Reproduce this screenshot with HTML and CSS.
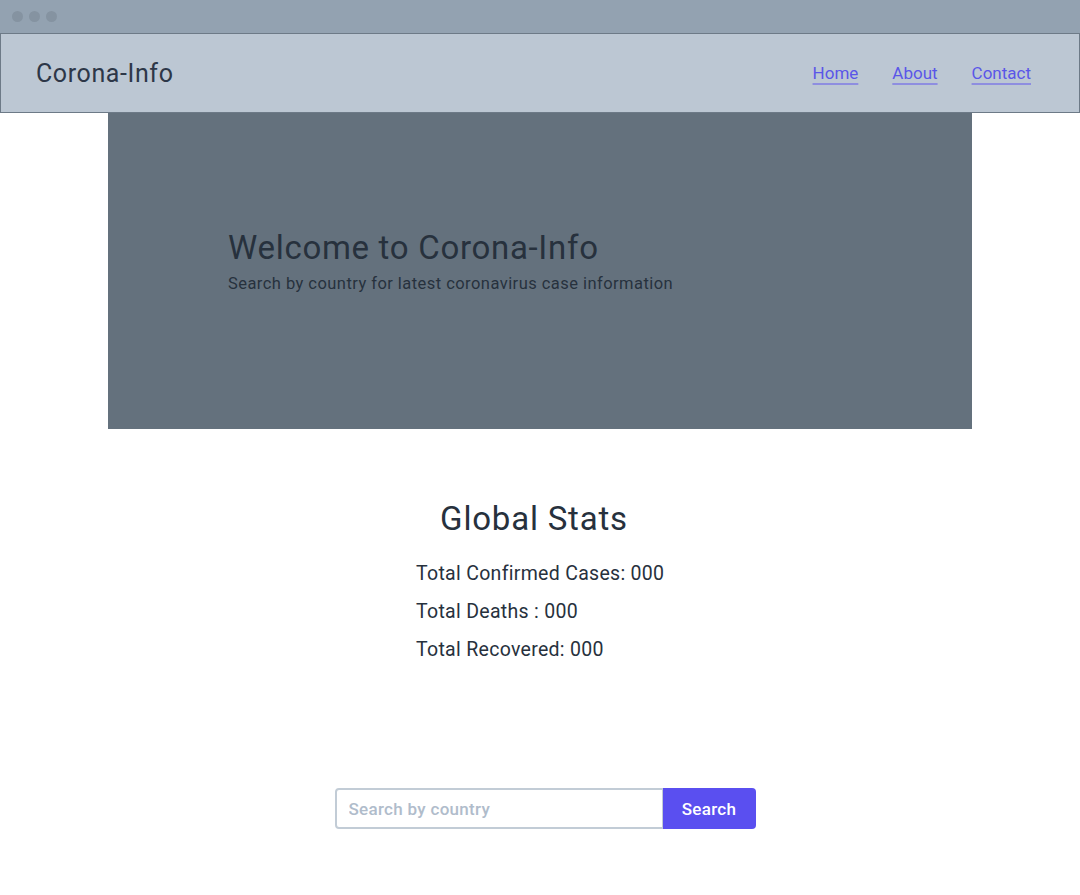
FILE: index.html
```html
<!DOCTYPE html>
<html>
<head>
<meta charset="utf-8">
<link rel="stylesheet" href="styles.css">
</head>
<body>
<div class="chrome">
  <span class="dot"></span><span class="dot"></span><span class="dot"></span>
</div>
<header class="header">
  <div class="brand">Corona-Info</div>
  <nav class="nav">
    <a href="#">Home</a>
    <a href="#">About</a>
    <a href="#">Contact</a>
  </nav>
</header>
<section class="hero">
  <div class="hero-inner">
    <h1>Welcome to Corona-Info</h1>
    <p>Search by country for latest coronavirus case information</p>
  </div>
</section>
<section class="stats">
  <h2>Global Stats</h2>
  <ul>
    <li>Total Confirmed Cases: 000</li>
    <li>Total Deaths : 000</li>
    <li>Total Recovered: 000</li>
  </ul>
</section>
<form class="search">
  <input type="text" placeholder="Search by country">
  <button type="button">Search</button>
</form>
</body>
</html>
```
FILE: styles.css
```css
* { box-sizing: border-box; }
html, body { margin: 0; padding: 0; background: #fff; }
body {
  font-family: Roboto, "Liberation Sans", sans-serif;
  color: #2d3748;
  width: 1080px;
  height: 895px;
  overflow: hidden;
}
.chrome {
  height: 33px;
  background: #93a2b1;
  display: flex;
  align-items: center;
  gap: 6px;
  padding-left: 12px;
}
.dot {
  width: 11px;
  height: 11px;
  border-radius: 50%;
  background: #8593a1;
}
.header {
  height: 80px;
  background: #bcc7d3;
  border: 1px solid #6d7a87;
  display: flex;
  align-items: center;
  justify-content: space-between;
  padding: 0 48px 0 35px;
}
.brand {
  font-size: 25px;
  color: #2d3748;
  letter-spacing: 0.6px;
}
.nav {
  display: flex;
  gap: 34px;
  padding-bottom: 1px;
}
.nav a {
  color: #5a56e8;
  font-size: 17px;
  text-decoration: underline;
  text-decoration-color: #8e8ee0;
  text-underline-offset: 4px;
  text-decoration-thickness: 2px;
}
.hero {
  width: 864px;
  height: 316px;
  margin: 0 auto;
  background: #64717d;
  display: flex;
  align-items: center;
  padding-left: 120px;
}
.hero-inner { padding-bottom: 20px; }
.hero h1 {
  margin: 0 0 6px 0;
  font-weight: 400;
  font-size: 33px;
  letter-spacing: 0.7px;
  color: #27313d;
  line-height: 40px;
}
.hero p {
  margin: 0;
  font-size: 16.5px;
  letter-spacing: 0.45px;
  color: #27313d;
  line-height: 20px;
}
.stats {
  display: flex;
  flex-direction: column;
  align-items: center;
  padding-top: 68px;
}
.stats h2 {
  margin: 0 12px 14px 0;
  font-weight: 400;
  font-size: 33px;
  letter-spacing: 0.8px;
  line-height: 44px;
  color: #27313d;
}
.stats ul {
  list-style: none;
  margin: 0;
  padding: 0;
  width: 248px;
}
.stats li {
  font-size: 19.5px;
  letter-spacing: 0.3px;
  line-height: 38px;
  white-space: nowrap;
  color: #27313d;
}
.search {
  display: flex;
  justify-content: center;
  margin-top: 119px;
  padding-left: 10px;
}
.search input {
  width: 329px;
  height: 41px;
  border: 2px solid #c2ccd6;
  border-radius: 4px 0 0 4px;
  padding: 0 12px;
  font-family: inherit;
  font-size: 17px;
  letter-spacing: 0.3px;
  font-weight: 500;
  outline: none;
}
.search input::placeholder { color: #b0bccb; }
.search button {
  width: 93px;
  height: 41px;
  margin-left: -1px;
  border: none;
  border-radius: 0 4px 4px 0;
  background: #5a4ff0;
  color: #fff;
  font-family: inherit;
  font-size: 17px;
  letter-spacing: 0.3px;
  font-weight: 500;
}
```
